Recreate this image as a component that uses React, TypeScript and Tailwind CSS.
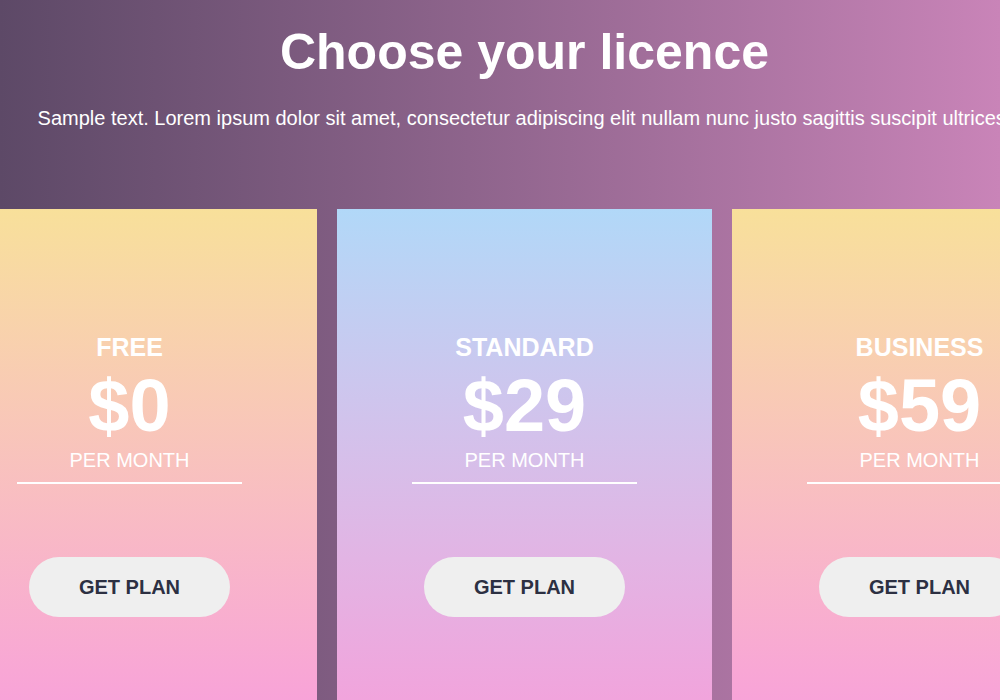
import React from "react";

type Plan = {
    name: string;
    price: string;
    tone: "warm" | "cool";
};

const plans: Plan[] = [
    { name: "FREE", price: "$0", tone: "warm" },
    { name: "STANDARD", price: "$29", tone: "cool" },
    { name: "BUSINESS", price: "$59", tone: "warm" },
];

const PlanCard: React.FC<{ plan: Plan }> = ({ plan }) => {
    const bg =
        plan.tone === "warm"
            ? "bg-gradient-to-b from-[#f8e09a] to-[#f8a3d8]"
            : "bg-gradient-to-b from-[#b1d8f8] to-[#f1a4dc]";

    return (
        <div className={`w-[375px] h-[491px] shrink-0 flex flex-col items-center pt-[126px] text-white ${bg}`}>
            <h3 className="text-[25px] leading-none font-bold">{plan.name}</h3>
            <div className="mt-[9px] text-[74px] leading-none font-bold">{plan.price}</div>
            <div className="mt-[7px] text-[20px] leading-none">PER MONTH</div>
            <div className="mt-[12px] w-[225px] h-[2px] bg-white" />
            <button className="mt-[73px] w-[201px] h-[60px] rounded-full bg-[#efefef] text-[#2c3042] text-[20px] font-bold">
                GET PLAN
            </button>
        </div>
    );
};

const App: React.FC = () => {
    return (
        <div
            className="w-[1000px] h-[700px] overflow-hidden bg-gradient-to-r from-[#5d4967] to-[#c984b8]"
            style={{ fontFamily: '"Liberation Sans", Arial, sans-serif' }}
        >
            <div className="ml-[-58px] w-[1165px] flex flex-col items-center">
                <h1 className="mt-[27px] text-[50px] leading-none font-bold text-white">Choose your licence</h1>
                <p className="mt-[31px] text-[20px] leading-none text-white whitespace-nowrap">
                    Sample text. Lorem ipsum dolor sit amet, consectetur adipiscing elit nullam nunc justo sagittis suscipit ultrices.
                </p>
                <div className="mt-[81px] flex gap-5">
                    {plans.map((p) => (
                        <PlanCard key={p.name} plan={p} />
                    ))}
                </div>
            </div>
        </div>
    );
};

export default App;
